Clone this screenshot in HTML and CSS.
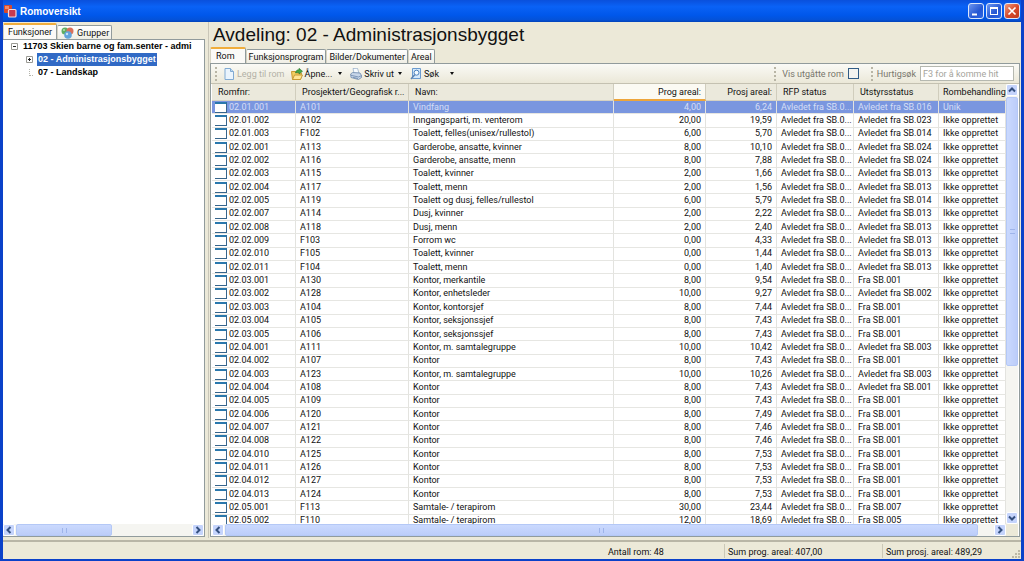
FILE: index.html
```html
<!DOCTYPE html>
<html lang="no">
<head>
<meta charset="utf-8">
<title>Romoversikt</title>
<link rel="stylesheet" href="styles.css">
</head>
<body>
<div class="window">
  <header class="titlebar">
    <svg class="app-icon" viewBox="0 0 13 13"><rect width="8" height="8" rx="1" fill="#d9482b"/><rect x="1" y="1" width="4" height="3" fill="#f08a68"/><rect x="4.500" y="4.500" width="7.500" height="7.500" rx="1" fill="#c73a50" stroke="#f4d9dc" stroke-width="1.200"/></svg>
    <h1 class="caption">Romoversikt</h1>
    <button class="win-btn" aria-label="Minimer"><svg viewBox="0 0 14 14"><path d="M3 10.500h5" stroke="#fff" stroke-width="2"/></svg></button>
    <button class="win-btn" aria-label="Maksimer"><svg viewBox="0 0 14 14"><path d="M3 3.500h8M3.500 3v8M10.500 3v8M3 10.500h8M3 4.500h8" stroke="#fff"/></svg></button>
    <button class="win-btn close" aria-label="Lukk"><svg viewBox="0 0 14 14"><path d="M3.500 3.500l7 7M10.500 3.500l-7 7" stroke="#fff" stroke-width="1.700"/></svg></button>
  </header>

  <main class="content">
    <aside class="sidebar">
      <div class="tabs side-tabs">
        <button class="tab active">Funksjoner</button>
        <button class="tab with-icon"><svg class="group-icon" viewBox="0 0 13 12"><circle cx="4" cy="4" r="3.500" fill="#5fae62"/><circle cx="9" cy="4" r="3.500" fill="#d9705b"/><circle cx="7" cy="8" r="3.800" fill="#62a4dc"/><circle cx="6" cy="7" r="1.200" fill="#c7e3f6"/><circle cx="3" cy="3" r="1" fill="#b9dfb1"/></svg>Grupper</button>
      </div>
      <div class="tree-panel">
        <ul class="tree">
          <li><svg class="toggle" viewBox="0 0 7 7"><path d="M.5.5h6v6h-6z" fill="#fff" stroke="#9a9a94"/><path d="M2 3.500h3" stroke="#222"/></svg><span class="node">11703 Skien barne og fam.senter - admi</span>
            <ul class="subtree">
              <li><svg class="toggle" viewBox="0 0 7 7"><path d="M.5.5h6v6h-6z" fill="#fff" stroke="#9a9a94"/><path d="M2 3.500h3M3.500 2v3" stroke="#222"/></svg><span class="node selected">02 - Administrasjonsbygget</span></li>
              <li><span class="toggle branch"></span><span class="node">07 - Landskap</span></li>
            </ul>
          </li>
        </ul>
        <div class="hscroll">
          <button class="arrow" aria-label="Venstre"><svg viewBox="0 0 10 10"><path d="M6.500 2l-3 3 3 3" /></svg></button>
          <div class="track"><div class="thumb side-thumb"><i class="grip"></i></div></div>
          <button class="arrow" aria-label="Høyre"><svg viewBox="0 0 10 10"><path d="M3.500 2l3 3-3 3" /></svg></button>
        </div>
      </div>
    </aside>

    <section class="main">
      <h2 class="heading">Avdeling: 02 - Administrasjonsbygget</h2>
      <div class="tabs main-tabs">
        <button class="tab active rom">Rom</button>
        <button class="tab">Funksjonsprogram</button>
        <button class="tab">Bilder/Dokumenter</button>
        <button class="tab">Areal</button>
      </div>
      <div class="panel">
        <div class="toolbar">
          <i class="handle"></i>
          <button class="tool" disabled><svg viewBox="0 0 12 12"><path d="M2 .5h5.500L10.500 3.500v8H2z" fill="#eaf4fd" stroke="#80aad3"/><path d="M7.500.5v3h3" fill="#bcd9f2" stroke="#80aad3"/></svg>Legg til rom</button>
          <button class="tool"><svg viewBox="0 0 12 12"><path d="M.5 3.500h4l1 1.500h5l-1 6.500H1.500z" fill="#f4cf62" stroke="#c79a35"/><path d="M1.500 11.500L3.500 7h8l-2 4.500z" fill="#ffe596" stroke="#c79a35"/><path d="M4.500 5C5 2 7 1.500 8 2V.3l3.500 3L8 6V4.500C6.500 4.200 5.500 4.500 4.500 5z" fill="#47a847" stroke="#26772c" stroke-width=".6"/></svg>Åpne...<i class="caret open-caret"></i></button>
          <button class="tool"><svg viewBox="0 0 12 12"><path d="M3 .5l4.500-.2 1.500 5H4z" fill="#f7fbff" stroke="#91a9c4" stroke-width=".7"/><path d="M.6 6l2-1.500L10 5l1.500 2.500v2L8.500 11.500 1 9.500z" fill="#c7d6e9" stroke="#6c88ac" stroke-width=".8"/><path d="M1 7.300l7.500 1.700 3-1.500M3 9.300l5 1.200" stroke="#6c88ac" fill="none" stroke-width=".8"/></svg>Skriv ut<i class="caret"></i></button>
          <button class="tool"><svg viewBox="0 0 12 12"><path d="M2.500.5h8v10h-8z" fill="#d5e9fb" stroke="#6b9bcf"/><circle cx="6.500" cy="4.700" r="2.500" fill="#f3faff" stroke="#4b80bd"/><path d="M4.700 6.700L1 11" stroke="#5d83b2" stroke-width="1.500"/></svg>Søk<i class="caret far"></i></button>
          <span class="spring"></span>
          <i class="handle"></i>
          <label class="tool-label first">Vis utgåtte rom<input class="check" type="checkbox"></label>
          <i class="handle second"></i>
          <label class="tool-label search">Hurtigsøk<input class="quick" type="text" placeholder="F3 for å komme hit"></label>
        </div>
        <div class="grid-area">
          <div class="table-view">
            <table class="rooms">
              <colgroup><col class="c-nr"><col class="c-geo"><col class="c-name"><col class="c-prog"><col class="c-prosj"><col class="c-rfp"><col class="c-uts"><col class="c-beh"></colgroup>
              <thead><tr><th>Romfnr:</th><th>Prosjektert/Geografisk r...</th><th>Navn:</th><th class="num sorted">Prog areal:</th><th class="num">Prosj areal:</th><th>RFP status</th><th>Utstyrsstatus</th><th>Rombehandling:</th></tr></thead>
              <tbody>
<tr class="picked"><td>02.01.001</td><td>A101</td><td>Vindfang</td><td>4,00</td><td>6,24</td><td>Avledet fra SB.0...</td><td>Avledet fra SB.016</td><td>Unik</td></tr>
<tr><td>02.01.002</td><td>A102</td><td>Inngangsparti, m. venterom</td><td>20,00</td><td>19,59</td><td>Avledet fra SB.0...</td><td>Avledet fra SB.023</td><td>Ikke opprettet</td></tr>
<tr><td>02.01.003</td><td>F102</td><td>Toalett, felles(unisex/rullestol)</td><td>6,00</td><td>5,70</td><td>Avledet fra SB.0...</td><td>Avledet fra SB.014</td><td>Ikke opprettet</td></tr>
<tr><td>02.02.001</td><td>A113</td><td>Garderobe, ansatte, kvinner</td><td>8,00</td><td>10,10</td><td>Avledet fra SB.0...</td><td>Avledet fra SB.024</td><td>Ikke opprettet</td></tr>
<tr><td>02.02.002</td><td>A116</td><td>Garderobe, ansatte, menn</td><td>8,00</td><td>7,88</td><td>Avledet fra SB.0...</td><td>Avledet fra SB.024</td><td>Ikke opprettet</td></tr>
<tr><td>02.02.003</td><td>A115</td><td>Toalett, kvinner</td><td>2,00</td><td>1,66</td><td>Avledet fra SB.0...</td><td>Avledet fra SB.013</td><td>Ikke opprettet</td></tr>
<tr><td>02.02.004</td><td>A117</td><td>Toalett, menn</td><td>2,00</td><td>1,56</td><td>Avledet fra SB.0...</td><td>Avledet fra SB.013</td><td>Ikke opprettet</td></tr>
<tr><td>02.02.005</td><td>A119</td><td>Toalett og dusj, felles/rullestol</td><td>6,00</td><td>5,79</td><td>Avledet fra SB.0...</td><td>Avledet fra SB.014</td><td>Ikke opprettet</td></tr>
<tr><td>02.02.007</td><td>A114</td><td>Dusj, kvinner</td><td>2,00</td><td>2,22</td><td>Avledet fra SB.0...</td><td>Avledet fra SB.013</td><td>Ikke opprettet</td></tr>
<tr><td>02.02.008</td><td>A118</td><td>Dusj, menn</td><td>2,00</td><td>2,40</td><td>Avledet fra SB.0...</td><td>Avledet fra SB.013</td><td>Ikke opprettet</td></tr>
<tr><td>02.02.009</td><td>F103</td><td>Forrom wc</td><td>0,00</td><td>4,33</td><td>Avledet fra SB.0...</td><td>Avledet fra SB.013</td><td>Ikke opprettet</td></tr>
<tr><td>02.02.010</td><td>F105</td><td>Toalett, kvinner</td><td>0,00</td><td>1,44</td><td>Avledet fra SB.0...</td><td>Avledet fra SB.013</td><td>Ikke opprettet</td></tr>
<tr><td>02.02.011</td><td>F104</td><td>Toalett, menn</td><td>0,00</td><td>1,40</td><td>Avledet fra SB.0...</td><td>Avledet fra SB.013</td><td>Ikke opprettet</td></tr>
<tr><td>02.03.001</td><td>A130</td><td>Kontor, merkantile</td><td>8,00</td><td>9,54</td><td>Avledet fra SB.0...</td><td>Fra SB.001</td><td>Ikke opprettet</td></tr>
<tr><td>02.03.002</td><td>A128</td><td>Kontor, enhetsleder</td><td>10,00</td><td>9,27</td><td>Avledet fra SB.0...</td><td>Avledet fra SB.002</td><td>Ikke opprettet</td></tr>
<tr><td>02.03.003</td><td>A104</td><td>Kontor, kontorsjef</td><td>8,00</td><td>7,44</td><td>Avledet fra SB.0...</td><td>Fra SB.001</td><td>Ikke opprettet</td></tr>
<tr><td>02.03.004</td><td>A105</td><td>Kontor, seksjonssjef</td><td>8,00</td><td>7,43</td><td>Avledet fra SB.0...</td><td>Fra SB.001</td><td>Ikke opprettet</td></tr>
<tr><td>02.03.005</td><td>A106</td><td>Kontor, seksjonssjef</td><td>8,00</td><td>7,43</td><td>Avledet fra SB.0...</td><td>Fra SB.001</td><td>Ikke opprettet</td></tr>
<tr><td>02.04.001</td><td>A111</td><td>Kontor, m. samtalegruppe</td><td>10,00</td><td>10,42</td><td>Avledet fra SB.0...</td><td>Avledet fra SB.003</td><td>Ikke opprettet</td></tr>
<tr><td>02.04.002</td><td>A107</td><td>Kontor</td><td>8,00</td><td>7,43</td><td>Avledet fra SB.0...</td><td>Fra SB.001</td><td>Ikke opprettet</td></tr>
<tr><td>02.04.003</td><td>A123</td><td>Kontor, m. samtalegruppe</td><td>10,00</td><td>10,26</td><td>Avledet fra SB.0...</td><td>Avledet fra SB.003</td><td>Ikke opprettet</td></tr>
<tr><td>02.04.004</td><td>A108</td><td>Kontor</td><td>8,00</td><td>7,43</td><td>Avledet fra SB.0...</td><td>Avledet fra SB.001</td><td>Ikke opprettet</td></tr>
<tr><td>02.04.005</td><td>A109</td><td>Kontor</td><td>8,00</td><td>7,43</td><td>Avledet fra SB.0...</td><td>Fra SB.001</td><td>Ikke opprettet</td></tr>
<tr><td>02.04.006</td><td>A120</td><td>Kontor</td><td>8,00</td><td>7,49</td><td>Avledet fra SB.0...</td><td>Fra SB.001</td><td>Ikke opprettet</td></tr>
<tr><td>02.04.007</td><td>A121</td><td>Kontor</td><td>8,00</td><td>7,46</td><td>Avledet fra SB.0...</td><td>Fra SB.001</td><td>Ikke opprettet</td></tr>
<tr><td>02.04.008</td><td>A122</td><td>Kontor</td><td>8,00</td><td>7,46</td><td>Avledet fra SB.0...</td><td>Fra SB.001</td><td>Ikke opprettet</td></tr>
<tr><td>02.04.010</td><td>A125</td><td>Kontor</td><td>8,00</td><td>7,53</td><td>Avledet fra SB.0...</td><td>Fra SB.001</td><td>Ikke opprettet</td></tr>
<tr><td>02.04.011</td><td>A126</td><td>Kontor</td><td>8,00</td><td>7,53</td><td>Avledet fra SB.0...</td><td>Fra SB.001</td><td>Ikke opprettet</td></tr>
<tr><td>02.04.012</td><td>A127</td><td>Kontor</td><td>8,00</td><td>7,53</td><td>Avledet fra SB.0...</td><td>Fra SB.001</td><td>Ikke opprettet</td></tr>
<tr><td>02.04.013</td><td>A124</td><td>Kontor</td><td>8,00</td><td>7,53</td><td>Avledet fra SB.0...</td><td>Fra SB.001</td><td>Ikke opprettet</td></tr>
<tr><td>02.05.001</td><td>F113</td><td>Samtale- / terapirom</td><td>30,00</td><td>23,44</td><td>Avledet fra SB.0...</td><td>Fra SB.007</td><td>Ikke opprettet</td></tr>
<tr><td>02.05.002</td><td>F110</td><td>Samtale- / terapirom</td><td>12,00</td><td>18,69</td><td>Avledet fra SB.0...</td><td>Fra SB.005</td><td>Ikke opprettet</td></tr>
              </tbody>
            </table>
          </div>
          <div class="vscroll">
            <button class="arrow" aria-label="Opp"><svg viewBox="0 0 10 10"><path d="M2 6.500l3-3 3 3" /></svg></button>
            <div class="vtrack"><div class="vthumb"><i class="vgrip"></i></div></div>
            <button class="arrow" aria-label="Ned"><svg viewBox="0 0 10 10"><path d="M2 3.500l3 3 3-3" /></svg></button>
          </div>
          <div class="hscroll">
            <button class="arrow" aria-label="Venstre"><svg viewBox="0 0 10 10"><path d="M6.500 2l-3 3 3 3" /></svg></button>
            <div class="track"><div class="thumb main-thumb"><i class="grip"></i></div></div>
            <button class="arrow" aria-label="Høyre"><svg viewBox="0 0 10 10"><path d="M3.500 2l3 3-3 3" /></svg></button>
          </div>
          <div class="corner"></div>
        </div>
      </div>
    </section>
  </main>

  <footer class="status">
    <span class="cell">Antall rom: 48</span>
    <span class="cell">Sum prog. areal: 407,00</span>
    <span class="cell">Sum prosj. areal: 489,29</span>
    <svg class="resize" viewBox="0 0 10 10"><path d="M7 1h2v2H7zM4 4h2v2H4zM7 4h2v2H7zM1 7h2v2H1zM4 7h2v2H4zM7 7h2v2H7z" fill="#bdb9a6"/></svg>
  </footer>
</div>
</body>
</html>
```
FILE: styles.css
```css
*, *::before { box-sizing: border-box; }
body { margin: 0; font: 9px/12px Roboto, "Liberation Sans", sans-serif; color: #111; }
button, input { font: inherit; color: inherit; margin: 0; }
button { padding: 0; border: 0; background: none; }
svg { display: block; fill: none; }
.window { display: flex; flex-direction: column; height: 100vh; overflow: hidden; background: #ece9d8; border: solid #0b41c9; border-width: 0 3px 2px; }

.titlebar { display: flex; align-items: center; gap: 2px; height: 22px; flex: none; margin: 0 -3px; padding: 0 4px; background: linear-gradient(#0a50dc, #0a62f6 30%, #0057ea 70%, #0452d8 90%, #0342b8); }
.app-icon { width: 13px; height: 13px; }
.caption { flex: 1; margin: 0 0 0 1px; padding-top: 2px; font: bold 10px/14px "Liberation Sans", sans-serif; color: #fff; }
.win-btn { width: 16px; height: 16px; border: 1px solid #dce7fb; border-radius: 3px; background: linear-gradient(135deg, #6c96f0, #2456d2 60%, #2f68e4); }
.close { background: linear-gradient(135deg, #f09a7c, #d5482a 55%, #c13a1c); }

.content { display: flex; flex: 1; min-height: 0; }
.sidebar { display: flex; flex-direction: column; width: 202px; flex: none; padding-bottom: 1px; }
.tabs { display: flex; align-items: flex-end; height: 16px; flex: none; }
.tab { height: 14px; padding: 0 2px; border: 1px solid #919b9c; border-bottom: 0; border-left-color: #d6d3c3; border-radius: 2px 2px 0 0; background: linear-gradient(#fff, #efeee5); white-space: nowrap; }
.tab.active { height: 16px; padding: 0 4px; border-top: 2px solid #f0ad3c; background: #fbfaf7; }
.tab.rom { padding: 0 10px 0 5px; }
.side-tabs { height: 17px; }
.with-icon { display: flex; align-items: center; gap: 3px; padding: 0 2px 0 3px; }
.group-icon { width: 13px; height: 12px; }
.tree-panel { display: flex; flex-direction: column; flex: 1; min-height: 0; background: #fff; border: 1px solid #919b9c; border-left: 0; }
.tree { flex: 1; overflow: hidden; margin: 0; padding: 0 0 0 8px; list-style: none; font: bold 9px/13px "Liberation Sans", sans-serif; color: #000; white-space: nowrap; }
.subtree { margin: 0; padding: 0 0 0 15px; list-style: none; }
.toggle { display: inline-block; width: 7px; height: 7px; margin-right: 4px; vertical-align: middle; }
.branch { border: dotted #b5b5ad; border-width: 0 0 1px 1px; margin-left: 3px; width: 4px; }
.node { display: inline-block; padding: 0 1px; }
.selected { background: #316ac5; color: #fff; }

.main { display: flex; flex-direction: column; flex: 1; min-width: 0; margin-left: 3px; padding-left: 1px; border-left: 1px solid #c9c6b8; }
.heading { margin: 0; padding-left: 3px; font: 19px/25px "Liberation Sans", sans-serif; color: #111; }
.panel { display: flex; flex-direction: column; flex: 1; min-height: 0; margin: 0 1px 1px 0; border: 1px solid #919b9c; }
.toolbar { display: flex; align-items: center; height: 20px; flex: none; padding: 0 5px 0 4px; border-bottom: 1px solid #c4c1b1; background: linear-gradient(#fafaf6, #ebe8d8); }
.handle { width: 2px; height: 14px; border-left: 2px dotted #b8b5a5; }
.tool { display: flex; align-items: center; gap: 2px; margin-left: 6px; white-space: nowrap; }
.tool:disabled { color: #b3b1a6; }
.tool svg { width: 12px; height: 12px; }
.caret { margin: 0 2px; border: solid transparent; border-width: 3px 2px 0; border-top-color: #111; }
.open-caret { margin-left: 4px; }
.far { margin-left: 9px; }
.spring { flex: 1; }
.tool-label { display: flex; align-items: center; gap: 4px; margin-left: 4px; color: #77756b; white-space: nowrap; }
.tool-label.first { margin-left: 6px; }
.check { appearance: none; width: 11px; height: 11px; border: 1px solid #315c86; background: #f4f4f0; }
.second { margin-left: 12px; }
.quick { width: 94px; height: 15px; padding: 0 2px; border: 1px solid #b5b8b0; background: #fff; }
.quick::placeholder { color: #a5a49c; opacity: 1; }

.grid-area { display: grid; grid-template: 1fr 12px / 1fr 12px; flex: 1; min-height: 0; background: #fff; padding: 0 1px; }
.table-view { overflow: hidden; min-width: 0; }
.rooms { width: 100%; height: calc(100% + 4px); table-layout: fixed; border-collapse: separate; border-spacing: 0; }
.c-nr { width: 84px; }
.c-geo { width: 113px; }
.c-prog { width: 92px; }
.c-prosj { width: 71px; }
.c-rfp { width: 77px; }
.c-uts { width: 85px; }
.c-beh { width: 67px; }
.rooms th, .rooms td { padding: 0 4px; overflow: hidden; white-space: nowrap; text-align: left; }
.rooms th { height: 17px; padding: 0 0 0 6px; font-weight: normal; background: #ebe9dc; border-right: 1px solid #d0cdbd; border-bottom: 1px solid #d6d2c2; }
.rooms .num { padding: 0 4px; text-align: right; }
.rooms .sorted { background: #fbfaf3; border-bottom: 2px solid #eda53b; }
.rooms th:last-child { padding: 0 0 0 4px; border-right: 0; }
.rooms td { line-height: 11px; border-right: 1px solid #e3e3df; border-bottom: 1px solid #e6e6e2; }
.rooms td:nth-child(4), .rooms td:nth-child(5) { text-align: right; }
.rooms td:nth-child(1) { padding-left: 3px; }
.rooms td:nth-child(1)::before { content: ""; float: left; width: 12px; height: 11px; margin-right: 2px; background: #fff; border: solid #37658c; border-width: 2px 1px 1px 0; border-top-color: #2a78ad; }
.rooms .picked td { background: #7a96df; color: #d5def6; }

.hscroll { display: flex; height: 12px; background: #f5f5f1; }
.vscroll { display: flex; flex-direction: column; background: #f5f5f1; }
.arrow { width: 12px; height: 12px; flex: none; border: 1px solid #fff; border-radius: 2px; background: #c5d4fc; }
.arrow path { stroke: #34507f; stroke-width: 2; }
.track, .vtrack { flex: 1; padding: 0 1px; }
.thumb { display: flex; align-items: center; justify-content: center; height: 12px; border: 1px solid #b4c8f6; border-radius: 2px; background: linear-gradient(#cad9fe, #bccdf9); }
.side-thumb { width: 55%; }
.main-thumb { width: 98%; }
.grip { width: 5px; height: 5px; border: solid #9eb4ea; border-width: 0 1px; }
.vtrack { padding: 1px 0; }
.vthumb { display: flex; align-items: center; justify-content: center; height: 65%; border: 1px solid #b4c8f6; border-radius: 2px; background: linear-gradient(90deg, #cad9fe, #bccdf9); }
.vgrip { width: 5px; height: 5px; border: solid #9eb4ea; border-width: 1px 0; }
.corner { background: #ece9d8; }

.status { display: flex; justify-content: flex-end; align-items: center; height: 19px; flex: none; margin-top: 2px; border-top: 2px solid #b9b6a6; }
.cell { width: 158px; padding: 2px 0 0 3px; border-left: 1px solid #cbc8b7; }
.cell:first-of-type { width: 119px; border-left: 0; }
.cell:nth-of-type(3) { width: 129px; }
.resize { width: 10px; height: 10px; align-self: flex-end; }
```
